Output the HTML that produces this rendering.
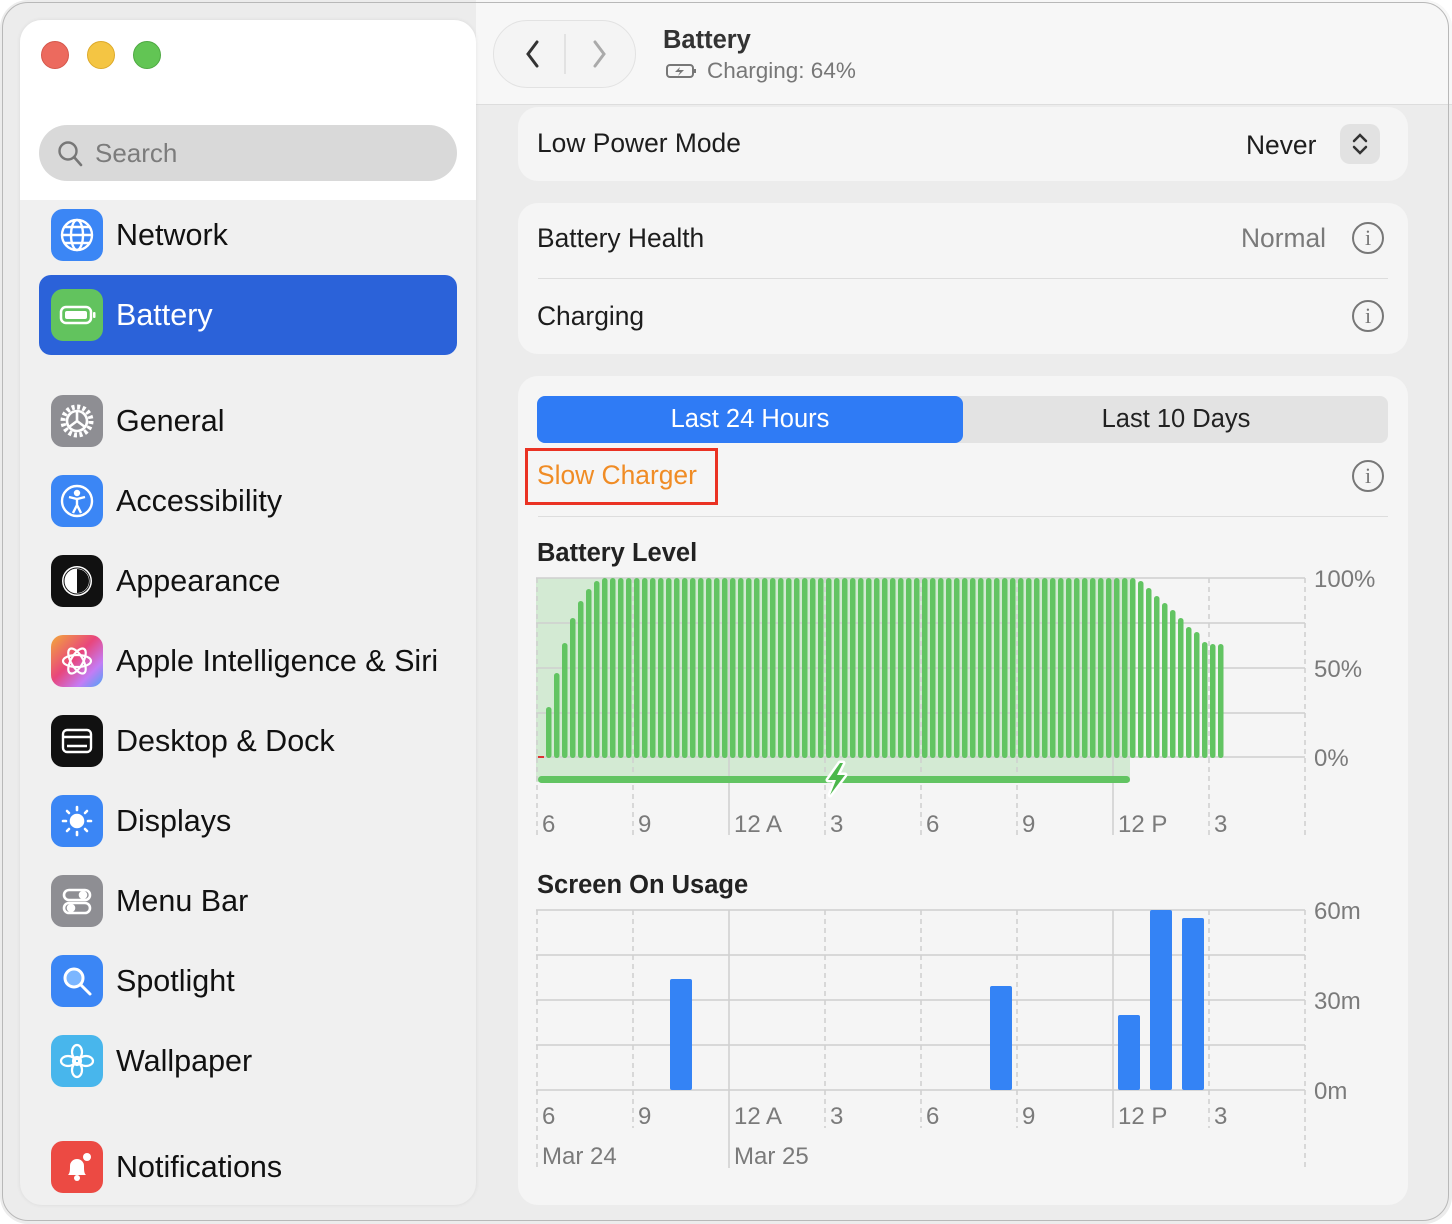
<!DOCTYPE html>
<html><head><meta charset="utf-8"><style>
*{box-sizing:border-box;margin:0;padding:0}
body{width:1452px;height:1224px;background:#fff;font-family:"Liberation Sans",sans-serif;position:relative;overflow:hidden}
.win{position:absolute;left:0;top:0;width:1452px;height:1224px;background:#ececec;overflow:hidden;border-radius:28px}
.frame{position:absolute;left:2px;top:2px;width:1447px;height:1219px;border:1px solid #b8b8b8;border-radius:26px}
.side{position:absolute;left:20px;top:20px;width:456px;height:1185px;background:#f0f0f0;border-radius:22px;overflow:hidden;box-shadow:0 0 4px rgba(0,0,0,.08)}
.sidetop{position:absolute;left:0;top:0;width:456px;height:180px;background:#fff}
.dot{position:absolute;top:21px;width:28px;height:28px;border-radius:50%}
.search{position:absolute;left:19px;top:105px;width:418px;height:56px;border-radius:28px;background:#d9d9d9;color:#7c7c7c;font-size:26px;line-height:56px;padding-left:56px}
.item{position:absolute;left:19px;width:418px;height:80px;font-size:30.5px;color:#111;line-height:80px;padding-left:77px}
.ic{position:absolute;left:12px;top:14px;width:52px;height:52px;border-radius:12px}
.sel{background:#2b62d9;color:#fff;border-radius:12px}
.hdr{position:absolute;left:476px;top:0;right:0;height:105px;background:#f7f7f7;border-bottom:1px solid #ddd}
.card{position:absolute;left:518px;width:890px;background:#f5f5f5;border-radius:20px}
.lbl{position:absolute;font-size:26.4px;color:#1d1d1d}
.gray{color:#7a7a7a}
.info{position:absolute;width:32px;height:32px;border:2px solid #777;border-radius:50%;color:#777;font-family:"Liberation Serif",serif;font-size:22px;text-align:center;line-height:28px}
.ax{position:absolute;font-size:24px;color:#7a7a7a}
</style></head><body>
<div class="win">
<div class="hdr"></div>
<div class="side">
 <div class="sidetop"></div>
 <div class="dot" style="left:21px;background:#ec6a5e;border:1px solid #d5574b"></div>
 <div class="dot" style="left:67px;background:#f4c543;border:1px solid #ddaa2a"></div>
 <div class="dot" style="left:113px;background:#62c554;border:1px solid #4ea942"></div>
 <div class="search"><svg style="position:absolute;left:18px;top:15px" width="28" height="28" viewBox="0 0 28 28"><circle cx="11" cy="11" r="8.5" fill="none" stroke="#777" stroke-width="2.4"/><line x1="17" y1="17" x2="24" y2="25" stroke="#777" stroke-width="2.6" stroke-linecap="round"/></svg>Search</div>
 <div class="item" style="top:175px"><div class="ic" style="background:#3b86f5"><svg width="52" height="52" viewBox="0 0 52 52" fill="none" stroke="#fff" stroke-width="2.4"><circle cx="26" cy="26" r="15"/><ellipse cx="26" cy="26" rx="6" ry="15"/><path d="M11 26h30M14 18h24M14 34h24"/></svg></div>Network</div>
 <div class="item sel" style="top:255px"><div class="ic" style="background:#62c35e"><svg width="52" height="52" viewBox="0 0 52 52"><rect x="10" y="18" width="30" height="16" rx="5" fill="none" stroke="#fff" stroke-width="2.5"/><rect x="14" y="22" width="22" height="8" rx="2" fill="#fff"/><rect x="42" y="23" width="2.5" height="6" rx="1" fill="#fff"/></svg></div>Battery</div>
 <div class="item" style="top:361px"><div class="ic" style="background:#8e8e93"><svg width="52" height="52" viewBox="0 0 52 52" fill="none" stroke="#fff" stroke-width="2.6"><circle cx="26" cy="26" r="14" stroke-dasharray="3 2.5" stroke-width="5"/><circle cx="26" cy="26" r="10"/><path d="M26 26v-10M26 26l-8 6M26 26l8 6"/></svg></div>General</div>
 <div class="item" style="top:441px"><div class="ic" style="background:#3b86f5"><svg width="52" height="52" viewBox="0 0 52 52" fill="none" stroke="#fff" stroke-width="2.4"><circle cx="26" cy="26" r="15"/><circle cx="26" cy="18" r="2" fill="#fff"/><path d="M18 22l8 2 8-2M26 24v6l-4 8M26 30l4 8"/></svg></div>Accessibility</div>
 <div class="item" style="top:521px"><div class="ic" style="background:#111"><svg width="52" height="52" viewBox="0 0 52 52"><circle cx="26" cy="26" r="15" fill="#fff"/><path d="M26 14a12 12 0 0 1 0 24z" fill="#111"/><circle cx="26" cy="26" r="13" fill="none" stroke="#111" stroke-width="1"/></svg></div>Appearance</div>
 <div class="item" style="top:601px"><div class="ic" style="background:linear-gradient(135deg,#f3a93a,#e8467c 45%,#c47cf5 75%,#4aa5f5)"><svg width="52" height="52" viewBox="0 0 52 52" fill="none" stroke="#fff" stroke-width="2.2"><ellipse cx="26" cy="26" rx="14" ry="6"/><ellipse cx="26" cy="26" rx="14" ry="6" transform="rotate(60 26 26)"/><ellipse cx="26" cy="26" rx="14" ry="6" transform="rotate(120 26 26)"/></svg></div>Apple Intelligence &amp; Siri</div>
 <div class="item" style="top:681px"><div class="ic" style="background:#111"><svg width="52" height="52" viewBox="0 0 52 52" fill="none" stroke="#fff" stroke-width="2.4"><rect x="12" y="15" width="28" height="22" rx="4"/><path d="M12 22h28M16 31h20"/></svg></div>Desktop &amp; Dock</div>
 <div class="item" style="top:761px"><div class="ic" style="background:#3b86f5"><svg width="52" height="52" viewBox="0 0 52 52" fill="none" stroke="#fff" stroke-width="2.6" stroke-linecap="round"><circle cx="26" cy="26" r="6" fill="#fff"/><path d="M26 12v3M26 37v3M12 26h3M37 26h3M16 16l2 2M34 34l2 2M16 36l2-2M34 18l2-2"/></svg></div>Displays</div>
 <div class="item" style="top:841px"><div class="ic" style="background:#8e8e93"><svg width="52" height="52" viewBox="0 0 52 52" fill="none" stroke="#fff" stroke-width="2.6"><rect x="13" y="15" width="26" height="10" rx="5"/><rect x="13" y="28" width="26" height="10" rx="5"/><circle cx="32" cy="20" r="3" fill="#fff"/><circle cx="20" cy="33" r="3" fill="#fff"/></svg></div>Menu Bar</div>
 <div class="item" style="top:921px"><div class="ic" style="background:#3b86f5"><svg width="52" height="52" viewBox="0 0 52 52" fill="none" stroke="#fff" stroke-width="3"><circle cx="23" cy="23" r="9" fill="#7bb6ff"/><path d="M30 30l9 9" stroke-linecap="round"/></svg></div>Spotlight</div>
 <div class="item" style="top:1001px"><div class="ic" style="background:#48b6ec"><svg width="52" height="52" viewBox="0 0 52 52" fill="none" stroke="#fff" stroke-width="2.2"><circle cx="26" cy="26" r="4"/><ellipse cx="26" cy="17" rx="5" ry="7"/><ellipse cx="26" cy="35" rx="5" ry="7"/><ellipse cx="17" cy="26" rx="7" ry="5"/><ellipse cx="35" cy="26" rx="7" ry="5"/></svg></div>Wallpaper</div>
 <div class="item" style="top:1107px"><div class="ic" style="background:#ec4a43"><svg width="52" height="52" viewBox="0 0 52 52"><path d="M17 34c2-2 2-5 2-9a7 7 0 0 1 14 0c0 4 0 7 2 9z" fill="#fff"/><circle cx="26" cy="37" r="3" fill="#fff"/><circle cx="36" cy="16" r="4" fill="#fff"/></svg></div>Notifications</div>
</div>

<div style="position:absolute;left:493px;top:20px;width:143px;height:68px;border-radius:34px;border:1px solid #e2e2e2;background:#f4f4f4"></div>
<svg style="position:absolute;left:493px;top:20px" width="143" height="68"><path d="M44 22l-9 12 9 12" fill="none" stroke="#333" stroke-width="3" stroke-linecap="round"/><line x1="72" y1="14" x2="72" y2="54" stroke="#ddd" stroke-width="1.5"/><path d="M102 22l9 12-9 12" fill="none" stroke="#aaa" stroke-width="3" stroke-linecap="round"/></svg>
<div style="position:absolute;left:663px;top:26px;font-size:25.5px;font-weight:bold;color:#333">Battery</div>
<svg style="position:absolute;left:666px;top:63px" width="32" height="16"><rect x="1" y="2" width="26" height="12" rx="3" fill="none" stroke="#777" stroke-width="2"/><path d="M14 4l-5 5h5l-2 4 6-6h-5z" fill="#777"/><rect x="28" y="6" width="2" height="4" fill="#777"/></svg>
<div style="position:absolute;left:707px;top:58px;font-size:22.5px;color:#777">Charging: 64%</div>

<div class="card" style="top:107px;height:74px"></div>
<div class="lbl" style="left:537px;top:128px">Low Power Mode</div>
<div class="lbl" style="left:1246px;top:130px">Never</div>
<div style="position:absolute;left:1340px;top:124px;width:40px;height:40px;border-radius:10px;background:#e2e2e2"></div>
<svg style="position:absolute;left:1340px;top:124px" width="40" height="40" fill="none" stroke="#333" stroke-width="2.5" stroke-linecap="round"><path d="M14 17l6-6 6 6M14 23l6 6 6-6"/></svg>

<div class="card" style="top:203px;height:151px"></div>
<div class="lbl" style="left:537px;top:223px">Battery Health</div>
<div class="lbl gray" style="left:1241px;top:223px">Normal</div>
<div class="info" style="left:1352px;top:222px">i</div>
<div style="position:absolute;left:538px;top:278px;width:850px;height:1px;background:#ddd"></div>
<div class="lbl" style="left:537px;top:301px">Charging</div>
<div class="info" style="left:1352px;top:300px">i</div>

<div class="card" style="top:376px;height:829px"></div>
<div style="position:absolute;left:537px;top:396px;width:851px;height:47px;border-radius:8px;background:#e3e3e3"></div>
<div style="position:absolute;left:537px;top:396px;width:426px;height:47px;border-radius:8px;background:#2f7bf5;color:#fff;font-size:25.5px;text-align:center;line-height:47px">Last 24 Hours</div>
<div style="position:absolute;left:963px;top:396px;width:426px;height:47px;color:#222;font-size:25.5px;text-align:center;line-height:47px">Last 10 Days</div>
<div style="position:absolute;left:525px;top:448px;width:193px;height:57px;border:3px solid #ea3223"></div>
<div style="position:absolute;left:537px;top:460px;font-size:26.4px;color:#f08c25">Slow Charger</div>
<div class="info" style="left:1352px;top:460px">i</div>
<div style="position:absolute;left:538px;top:516px;width:850px;height:1px;background:#ddd"></div>

<div style="position:absolute;left:537px;top:539px;font-size:25.5px;font-weight:bold;color:#222">Battery Level</div>
<svg style="position:absolute;left:0;top:0" width="1452" height="1224">
<defs><pattern id="bp" x="602" y="0" width="8" height="1224" patternUnits="userSpaceOnUse"><rect x="0" y="578" width="5.5" height="180" rx="2.7" fill="#62c462"/></pattern></defs>
<rect x="536" y="578" width="594" height="204" fill="#d3ead3"/>
<g stroke="#cfcfcf" stroke-width="1.5">
<line x1="536" y1="578" x2="1305" y2="578"/><line x1="536" y1="623" x2="1305" y2="623"/><line x1="536" y1="668" x2="1305" y2="668"/><line x1="536" y1="713" x2="1305" y2="713"/><line x1="536" y1="757" x2="1305" y2="757"/>
<line x1="729" y1="578" x2="729" y2="835"/><line x1="1113" y1="578" x2="1113" y2="835"/>
</g>
<g stroke="#cfcfcf" stroke-width="1.5" stroke-dasharray="5 4">
<line x1="537" y1="578" x2="537" y2="835"/><line x1="633" y1="578" x2="633" y2="835"/><line x1="825" y1="578" x2="825" y2="835"/><line x1="921" y1="578" x2="921" y2="835"/><line x1="1017" y1="578" x2="1017" y2="835"/><line x1="1209" y1="578" x2="1209" y2="835"/><line x1="1305" y1="578" x2="1305" y2="835"/>
</g>
<rect x="602" y="578" width="536" height="180" fill="url(#bp)"/>
<g fill="#62c462">
<rect x="546" y="707" width="5.5" height="51" rx="2.7"/><rect x="554" y="673" width="5.5" height="85" rx="2.7"/><rect x="562" y="643" width="5.5" height="115" rx="2.7"/><rect x="570" y="618" width="5.5" height="140" rx="2.7"/><rect x="578" y="601" width="5.5" height="157" rx="2.7"/><rect x="586" y="589" width="5.5" height="169" rx="2.7"/><rect x="594" y="581" width="5.5" height="177" rx="2.7"/>
<rect x="1138" y="581" width="5.5" height="177" rx="2.7"/><rect x="1146" y="588" width="5.5" height="170" rx="2.7"/><rect x="1154" y="596" width="5.5" height="162" rx="2.7"/><rect x="1162" y="603" width="5.5" height="155" rx="2.7"/><rect x="1170" y="610" width="5.5" height="148" rx="2.7"/><rect x="1178" y="618" width="5.5" height="140" rx="2.7"/><rect x="1186" y="627" width="5.5" height="131" rx="2.7"/><rect x="1194" y="632" width="5.5" height="126" rx="2.7"/><rect x="1202" y="642" width="5.5" height="116" rx="2.7"/><rect x="1210" y="644" width="5.5" height="114" rx="2.7"/><rect x="1218" y="644" width="5.5" height="114" rx="2.7"/>
<rect x="538" y="776" width="592" height="7" rx="3.5"/>
</g>
<rect x="538" y="756" width="6" height="2" fill="#d33"/>
<path d="M840 763 L828 780 L836 780 L830 795 L845 775 L837 775 L843 763 Z" fill="#fff" stroke="#fff" stroke-width="5" stroke-linejoin="round"/>
<path d="M840 763 L828 780 L836 780 L830 795 L845 775 L837 775 L843 763 Z" fill="#4cb84c"/>

<g stroke="#cfcfcf" stroke-width="1.5">
<line x1="536" y1="910" x2="1305" y2="910"/><line x1="536" y1="955" x2="1305" y2="955"/><line x1="536" y1="1000" x2="1305" y2="1000"/><line x1="536" y1="1045" x2="1305" y2="1045"/><line x1="536" y1="1090" x2="1305" y2="1090"/>
<line x1="729" y1="910" x2="729" y2="1168"/><line x1="1113" y1="910" x2="1113" y2="1128"/>
</g>
<g stroke="#cfcfcf" stroke-width="1.5" stroke-dasharray="5 4">
<line x1="537" y1="910" x2="537" y2="1168"/><line x1="633" y1="910" x2="633" y2="1128"/><line x1="825" y1="910" x2="825" y2="1128"/><line x1="921" y1="910" x2="921" y2="1128"/><line x1="1017" y1="910" x2="1017" y2="1128"/><line x1="1209" y1="910" x2="1209" y2="1128"/><line x1="1305" y1="910" x2="1305" y2="1168"/>
</g>
<g fill="#3483f5">
<rect x="670" y="979" width="22" height="111" rx="2"/><rect x="990" y="986" width="22" height="104" rx="2"/><rect x="1118" y="1015" width="22" height="75" rx="2"/><rect x="1150" y="910" width="22" height="180" rx="2"/><rect x="1182" y="918" width="22" height="172" rx="2"/>
</g>
</svg>
<div class="ax" style="left:1314px;top:566px">100%</div>
<div class="ax" style="left:1314px;top:656px">50%</div>
<div class="ax" style="left:1314px;top:745px">0%</div>
<div class="ax" style="left:542px;top:811px">6</div><div class="ax" style="left:638px;top:811px">9</div><div class="ax" style="left:734px;top:811px">12 A</div><div class="ax" style="left:830px;top:811px">3</div><div class="ax" style="left:926px;top:811px">6</div><div class="ax" style="left:1022px;top:811px">9</div><div class="ax" style="left:1118px;top:811px">12 P</div><div class="ax" style="left:1214px;top:811px">3</div>

<div style="position:absolute;left:537px;top:871px;font-size:25.5px;font-weight:bold;color:#222">Screen On Usage</div>
<div class="ax" style="left:1314px;top:898px">60m</div>
<div class="ax" style="left:1314px;top:988px">30m</div>
<div class="ax" style="left:1314px;top:1078px">0m</div>
<div class="ax" style="left:542px;top:1103px">6</div><div class="ax" style="left:638px;top:1103px">9</div><div class="ax" style="left:734px;top:1103px">12 A</div><div class="ax" style="left:830px;top:1103px">3</div><div class="ax" style="left:926px;top:1103px">6</div><div class="ax" style="left:1022px;top:1103px">9</div><div class="ax" style="left:1118px;top:1103px">12 P</div><div class="ax" style="left:1214px;top:1103px">3</div>
<div class="ax" style="left:542px;top:1143px">Mar 24</div><div class="ax" style="left:734px;top:1143px">Mar 25</div>
</div>
<div class="frame"></div>
</body></html>
